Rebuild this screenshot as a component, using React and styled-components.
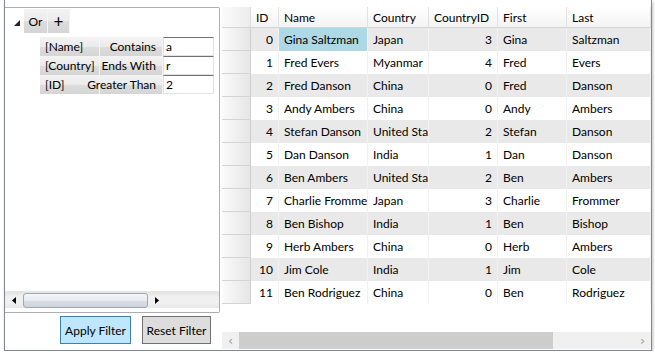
import React from 'react'
import styled, { createGlobalStyle } from 'styled-components'

const GlobalStyle = createGlobalStyle`
  html, body {
    margin: 0;
    padding: 0;
    background: #ffffff;
  }
  body {
    font-family: Lato, "Noto Sans", sans-serif;
    font-size: 12px;
    color: #000;
  }
`

const people = [
    [0, 'Gina Saltzman', 'Japan', 3, 'Gina', 'Saltzman'],
    [1, 'Fred Evers', 'Myanmar', 4, 'Fred', 'Evers'],
    [2, 'Fred Danson', 'China', 0, 'Fred', 'Danson'],
    [3, 'Andy Ambers', 'China', 0, 'Andy', 'Ambers'],
    [4, 'Stefan Danson', 'United States', 2, 'Stefan', 'Danson'],
    [5, 'Dan Danson', 'India', 1, 'Dan', 'Danson'],
    [6, 'Ben Ambers', 'United States', 2, 'Ben', 'Ambers'],
    [7, 'Charlie Frommer', 'Japan', 3, 'Charlie', 'Frommer'],
    [8, 'Ben Bishop', 'India', 1, 'Ben', 'Bishop'],
    [9, 'Herb Ambers', 'China', 0, 'Herb', 'Ambers'],
    [10, 'Jim Cole', 'India', 1, 'Jim', 'Cole'],
    [11, 'Ben Rodriguez', 'China', 0, 'Ben', 'Rodriguez'],
]

const columns = ['ID', 'Name', 'Country', 'CountryID', 'First', 'Last']
const rightAligned = [true, false, false, true, false, false]

const filters = [
    { field: '[Name]', op: 'Contains', value: 'a' },
    { field: '[Country]', op: 'Ends With', value: 'r' },
    { field: '[ID]', op: 'Greater Than', value: '2' },
]

function App()
{
    return (
        <>
            <GlobalStyle />
            <Window>
                <LeftColumn>
                    <FilterPanel>
                        <FilterTree>
                            <GroupRow>
                                <Expander>
                                    <svg width='6' height='6' viewBox='0 0 6 6'>
                                        <polygon points='6,0 6,6 0,6' fill='#262626' />
                                    </svg>
                                </Expander>
                                <TreeButton $w={24}>Or</TreeButton>
                                <TreeButton $w={22} $big>+</TreeButton>
                            </GroupRow>
                            {filters.map(f => (
                                <FilterRow key={f.field}>
                                    <FieldCell>{f.field}</FieldCell>
                                    <OpCell>{f.op}</OpCell>
                                    <ValueInput>{f.value}</ValueInput>
                                </FilterRow>
                            ))}
                        </FilterTree>
                        <ClassicScroll>
                            <ClassicArrow>
                                <svg width='4' height='7' viewBox='0 0 4 7'>
                                    <polygon points='4,0 4,7 0,3.5' fill='#000' />
                                </svg>
                            </ClassicArrow>
                            <ClassicThumb />
                            <ClassicArrow>
                                <svg width='4' height='7' viewBox='0 0 4 7'>
                                    <polygon points='0,0 0,7 4,3.5' fill='#000' />
                                </svg>
                            </ClassicArrow>
                        </ClassicScroll>
                    </FilterPanel>
                    <ButtonBar>
                        <Button $primary $w={71}>Apply Filter</Button>
                        <Button $w={69}>Reset Filter</Button>
                    </ButtonBar>
                </LeftColumn>

                <GridArea>
                    <Table>
                        <Corner />
                        {columns.map(c => (
                            <HeaderCell key={c}>{c}</HeaderCell>
                        ))}
                        {people.map((p, r) => (
                            <React.Fragment key={p[0]}>
                                <RowHeader />
                                {p.map((v, i) => (
                                    <Cell
                                        key={i}
                                        $alt={r % 2 === 0}
                                        $right={rightAligned[i]}
                                        $selected={r === 0 && i === 1}
                                    >
                                        {v}
                                    </Cell>
                                ))}
                            </React.Fragment>
                        ))}
                    </Table>
                    <Filler />
                    <FlatScroll>
                        <FlatArrow>‹</FlatArrow>
                        <FlatTrack>
                            <FlatThumb />
                        </FlatTrack>
                        <FlatArrow>›</FlatArrow>
                    </FlatScroll>
                </GridArea>
            </Window>
        </>
    )
}

export default App

const Window = styled.div`
    box-sizing: border-box;
    margin-left: 4px;
    width: 648px;
    height: 351px;
    border: 1px solid #828790;
    border-top: none;
    box-shadow: 1px 2px 3px rgba(0, 0, 0, 0.25);
    display: flex;
`

const LeftColumn = styled.div`
    width: 216px;
    display: flex;
    flex-direction: column;
    padding-top: 7px;
`

const FilterPanel = styled.div`
    box-sizing: border-box;
    width: 215px;
    height: 306px;
    border: 1px solid #abadb3;
    border-left: none;
    border-radius: 0 2px 2px 0;
    display: flex;
    flex-direction: column;
    overflow: hidden;
`

const FilterTree = styled.div`
    flex: 1;
    padding: 1px 0 0 9px;
    display: flex;
    flex-direction: column;
`

const GroupRow = styled.div`
    display: flex;
    align-items: center;
    height: 24px;
    margin-bottom: 4px;
`

const Expander = styled.div`
    width: 10px;
    display: flex;
    align-items: center;
    justify-content: flex-start;
    padding-top: 3px;
`

const TreeButton = styled.div`
    box-sizing: border-box;
    width: ${p => p.$w}px;
    height: 24px;
    display: flex;
    align-items: center;
    justify-content: center;
    background: linear-gradient(#f3f3f3, #ebebeb 50%, #dddddd 51%, #d5d5d5);
    font-size: ${p => (p.$big ? '17px' : '12px')};
    border-right: 1px solid #f4f4f4;
`

const FilterRow = styled.div`
    display: flex;
    height: 19px;
    margin-left: 26px;
`

const gradientCell = `
    box-sizing: border-box;
    height: 19px;
    display: flex;
    align-items: center;
    background: linear-gradient(#f3f3f3, #ebebeb 50%, #dddddd 51%, #d5d5d5);
    border-right: 1px solid #f4f4f4;
    white-space: nowrap;
`

const FieldCell = styled.div`
    ${gradientCell}
    width: 60px;
    padding-left: 5px;
`

const OpCell = styled.div`
    ${gradientCell}
    width: 63px;
    justify-content: flex-end;
    padding-right: 6px;
`

const ValueInput = styled.div`
    box-sizing: border-box;
    width: 51px;
    height: 19px;
    border: 1px solid #dfe3e8;
    border-top: 1px solid #707070;
    padding-left: 2px;
    display: flex;
    align-items: center;
    background: #fff;
`

const ClassicScroll = styled.div`
    height: 16px;
    margin-bottom: 4px;
    display: flex;
    align-items: center;
    background: linear-gradient(#e3e3e3, #f0f0f0 30%, #f0f0f0 70%, #e8e8e8);
    border-top: 1px solid #e6e6e6;
`

const ClassicArrow = styled.div`
    width: 18px;
    height: 100%;
    display: flex;
    align-items: center;
    justify-content: center;
`

const ClassicThumb = styled.div`
    box-sizing: border-box;
    width: 125px;
    height: 15px;
    border: 1px solid #a0a8b4;
    border-radius: 3px;
    background: linear-gradient(#f4f6f8, #e8ecf0 50%, #d8dde6 51%, #cfd5de);
`

const ButtonBar = styled.div`
    display: flex;
    justify-content: flex-end;
    gap: 11px;
    padding: 3px 10px 0 0;
`

const Button = styled.div`
    box-sizing: border-box;
    width: ${p => p.$w}px;
    height: 28px;
    display: flex;
    align-items: center;
    justify-content: center;
    white-space: nowrap;
    border: 1px solid ${p => (p.$primary ? '#3c7fb1' : '#707070')};
    background: ${p => (p.$primary ? '#bee6fd' : '#dddddd')};
`

const GridArea = styled.div`
    flex: 1;
    display: flex;
    flex-direction: column;
    padding: 7px 0 0 1px;
`

const Table = styled.div`
    display: grid;
    grid-template-columns: 29px 28px 89px 61px 69px 69px 1fr;
    grid-auto-rows: 23px;
    grid-template-rows: 21px;
`

const Corner = styled.div`
    box-sizing: border-box;
    background: linear-gradient(90deg, #fbfbfb, #ececec);
    border-right: 1px solid #dcdcdc;
    border-bottom: 1px solid #d5d5d5;
`

const HeaderCell = styled.div`
    box-sizing: border-box;
    display: flex;
    align-items: center;
    padding-left: 5px;
    background: linear-gradient(#ffffff, #f3f3f3);
    border-right: 1px solid #e2e2e2;
    border-bottom: 1px solid #d5d5d5;
    white-space: nowrap;
    overflow: hidden;
`

const RowHeader = styled.div`
    box-sizing: border-box;
    background: linear-gradient(90deg, #fbfbfb, #e6e6e6);
    border-bottom: 1px solid #d5d5d5;
    border-right: 1px solid #cfcfcf;
`

const Cell = styled.div`
    box-sizing: border-box;
    display: flex;
    align-items: center;
    justify-content: ${p => (p.$right ? 'flex-end' : 'flex-start')};
    padding: ${p => (p.$right ? '0 5px 0 0' : '0 0 0 5px')};
    background: ${p => (p.$selected ? '#add8e6' : p.$alt ? '#e9e9e9' : '#ffffff')};
    border-right: 1px solid #f1f1f1;
    white-space: nowrap;
    overflow: hidden;
`

const Filler = styled.div`
    flex: 1;
`

const FlatScroll = styled.div`
    height: 17px;
    margin-bottom: 1px;
    display: flex;
    align-items: center;
    background: #f0f0f0;
`

const FlatArrow = styled.div`
    width: 17px;
    display: flex;
    align-items: center;
    justify-content: center;
    color: #a3a3a3;
    font-family: "DejaVu Sans", sans-serif;
    font-size: 13px;
    line-height: 17px;
`

const FlatTrack = styled.div`
    flex: 1;
    height: 100%;
    display: flex;
    align-items: center;
`

const FlatThumb = styled.div`
    width: 314px;
    height: 100%;
    background: #cdcdcd;
`
